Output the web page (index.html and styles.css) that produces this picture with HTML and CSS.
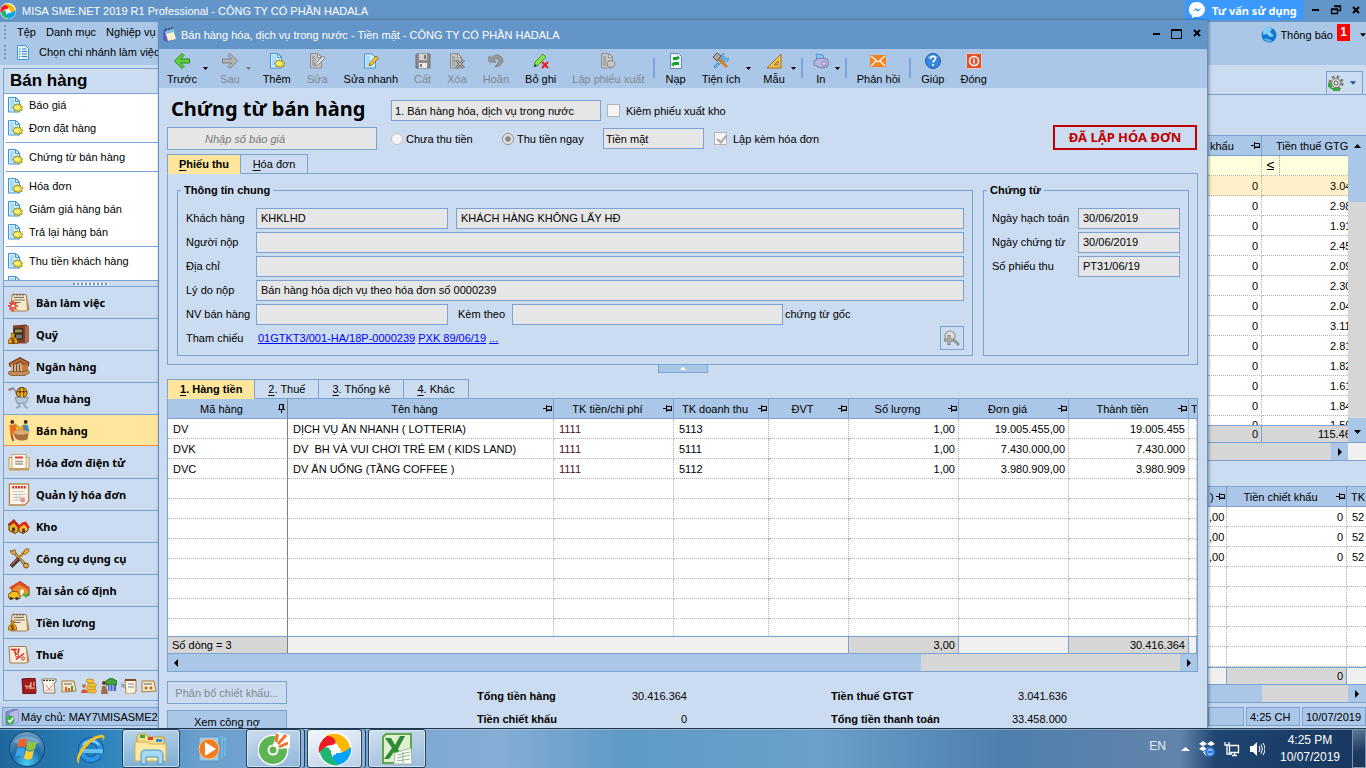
FILE: index.html
```
<!DOCTYPE html>
<html lang="vi">
<head>
    <meta charset="UTF-8">
    <meta name="viewport" content="width=device-width, initial-scale=1.0">
    <title>MISA SME.NET 2019 R1 Professional</title>
    <link rel="stylesheet" href="styles.css">
</head>
<body>
    <!-- shared icons -->
    <svg class="defs" aria-hidden="true">
        <symbol id="doc" viewBox="0 0 16 16">
            <path d="M1.500.500h7.500l3.500 3.500v11h-11z" fill="#d9f0fd" stroke="#3b94d9"/>
            <path d="M3 2h4v11h-4z" fill="#a9daf8"/>
            <path d="M8.500.500v4h4z" fill="#fff" stroke="#3b94d9"/>
            <path d="M10 6.500l1.500 1.300 2-.5.3 1.800 2 .9-1 1.500.4 1.800-2.200.2-1.800 1.200-1.700-1.200-2.500 0 .3-1.900-1.800-1.300 2-1.100.2-1.800 2.200.4z" fill="#e8d83c" stroke="#8a8420" stroke-width=".8"/>
            <ellipse cx="10" cy="10.500" rx="2.800" ry="1.700" fill="#fff27d"/>
        </symbol>
        <symbol id="docGray" viewBox="0 0 16 16">
            <path d="M1.500.500h7.500l3.500 3.500v11h-11z" fill="#c4c4c4" stroke="#8e8e8e"/>
            <path d="M8.500.500v4h4z" fill="#eee" stroke="#8e8e8e"/>
            <path d="M3 3h3v10H3z" fill="#a8a8a8"/>
        </symbol>
        <symbol id="pin" viewBox="0 0 9 8">
            <path d="M0 4.500h3M3.500 1v7M3.500 2.500h5v4h-5" fill="none" stroke="#000"/>
            <path d="M3 5.500h6v1.500H3z"/>
        </symbol>
        <symbol id="pinDown" viewBox="0 0 8 9">
            <path d="M0 5.500h7M1.500 5v-4.500h4v5M3.500 6v3" fill="none" stroke="#000"/>
            <path d="M4.500 0h1.500v5.500H4.500z"/>
        </symbol>
        <symbol id="down" viewBox="0 0 7 4"><path d="M0 0h7l-3.500 4z" fill="currentColor"/></symbol>
        <symbol id="right" viewBox="0 0 4 8"><path d="M0 0l4 4-4 4z"/></symbol>
        <symbol id="left" viewBox="0 0 4 8"><path d="M4 0l-4 4 4 4z"/></symbol>
        <symbol id="misa" viewBox="0 0 32 32">
            <circle cx="16" cy="16" r="16" fill="#fff"/>
            <path d="M7 4a15 15 0 0 1 23 10c-2 6-8 6-10 2-1-6-7-9-13-12z" fill="#fdb600"/>
            <path d="M31 14a15 15 0 0 1-12 17c-6 0-7-7-3-11 6 0 11-2 15-6z" fill="#00a2f5"/>
            <path d="M20 31a15 15 0 0 1-18-11c0-6 7-7 10-4 0 6 3 11 8 15z" fill="#1db673"/>
            <path d="M1 20a15 15 0 0 1 7-16c6-1 10 4 8 8-6 0-11 2-15 8z" fill="#ed1c24"/>
            <path d="M16 10l2 4 4 2-4 2-2 4-2-4-4-2 4-2z" fill="#fff"/>
        </symbol>
        <symbol id="note" viewBox="0 0 22 20">
            <path d="M4 2h14l3 15-3 1.500H3z" fill="#f5e8cc" stroke="#a37c4a"/>
            <path d="M18 2l3 15-2 1z" fill="#b98444"/>
            <path d="M6 5h10M6 7.500h11M5.500 10h7" stroke="#7d6c58"/>
            <path d="M6 1v3M9 1v3M12 1v3M15 1v3" stroke="#555" stroke-width=".8"/>
        </symbol>
        <symbol id="bag" viewBox="0 0 10 12">
            <path d="M3 1h4l-1 3c3 2 4 4 3.500 7h-9c-.5-3 .5-5 3.500-7z" fill="#f0a810" stroke="#7a4a06" stroke-width=".8"/>
            <path d="M6.500 6h-3v2h3v2h-3M5 5v6" fill="none" stroke="#5a2d00" stroke-width=".8"/>
        </symbol>
    </svg>

    <div class="desktop">
        <div class="app">
            <header class="app-title">
                <svg class="app-logo"><use href="#misa"/></svg>
                <span>MISA SME.NET 2019 R1 Professional - CÔNG TY CỔ PHẦN HADALA</span>
                <button class="support">
                    <svg width="16" height="16" viewBox="0 0 16 16"><path d="M8 0a8 7.500 0 0 1 0 15l-2-.3-3 1.300v-2.500a8 7.500 0 0 1 5-13.500z" fill="#fff"/><path d="M3.500 9.500l3.500-3.500 2 1.800 3.500-1.800-3.500 3.700-2-1.900z" fill="#2a8ff5"/></svg>
                    Tư vấn sử dụng
                </button>
                <div class="win-buttons">
                    <button aria-label="Thu nhỏ"><svg width="10" height="10"><path d="M1 5h7" stroke="#000" stroke-width="2"/></svg></button>
                    <button aria-label="Khôi phục"><svg width="12" height="10"><path d="M4.500 1.500h6v4h-3M4 1h7M1.500 4.500h6v4h-6zM1 4h7" fill="none" stroke="#000" stroke-width="1.300"/></svg></button>
                    <button aria-label="Đóng"><svg width="10" height="10"><path d="M2 2l6 6M8 2l-6 6" stroke="#000" stroke-width="2"/></svg></button>
                </div>
            </header>

            <div class="app-bars">
                <div>
                    <nav class="menu-row">
                        <i class="grip"></i>
                        <a href="#">Tệp</a>
                        <a href="#">Danh mục</a>
                        <a href="#">Nghiệp vụ</a>
                    </nav>
                    <div class="menu-row branch">
                        <i class="grip"></i>
                        <svg width="12" height="15" viewBox="0 0 12 15"><path d="M.5.5h8l3 3v11h-11z" fill="#e4f3fd" stroke="#3b94d9"/><path d="M5 4h4M5 6.500h5M5 9h5M5 11.500h5M2 4h1.500M2 6.500h1.500M2 9h1.500M2 11.500h1.500" stroke="#2c7fc4"/></svg>
                        <span>Chọn chi nhánh làm việc</span>
                    </div>
                </div>
                <div class="notice">
                    <svg width="16" height="16" viewBox="0 0 16 16"><circle cx="8" cy="8" r="7.500" fill="#1674cf"/><path d="M2 3c3-3 7-3 9-1l-2 3 4 4-4 1-3-3-4 1z" fill="#7fd0fb"/><path d="M3 12c3-1 5 0 8 2-3 2-6 1-8-2z" fill="#58b4ef"/></svg>
                    <span>Thông báo</span>
                    <b class="badge">1</b>
                    <svg class="caret"><use href="#down"/></svg>
                </div>
            </div>

            <div class="app-body">
                <aside class="sidebar">
                    <h2>Bán hàng</h2>
                    <ul class="tasks">
                        <li><svg><use href="#doc"/></svg><a href="#">Báo giá</a></li>
                        <li><svg><use href="#doc"/></svg><a href="#">Đơn đặt hàng</a></li>
                        <li class="line"></li>
                        <li><svg><use href="#doc"/></svg><a href="#">Chứng từ bán hàng</a></li>
                        <li class="line"></li>
                        <li><svg><use href="#doc"/></svg><a href="#">Hóa đơn</a></li>
                        <li><svg><use href="#doc"/></svg><a href="#">Giảm giá hàng bán</a></li>
                        <li><svg><use href="#doc"/></svg><a href="#">Trả lại hàng bán</a></li>
                        <li class="line"></li>
                        <li><svg><use href="#doc"/></svg><a href="#">Thu tiền khách hàng</a></li>
                        <li><svg><use href="#doc"/></svg></li>
                    </ul>
                    <div class="splitter"><i></i></div>
                    <nav class="modules">
                        <a href="#">
                            <svg viewBox="0 0 22 20"><use href="#note"/><path d="M5 8v11M0 13.500h10M1.500 10l7 7M8.500 10l-7 7" stroke="#e8301c" stroke-width="1.600"/><circle cx="5" cy="13.500" r="1.500" fill="#fff"/></svg>
                            Bàn làm việc
                        </a>
                        <a href="#">
                            <svg viewBox="0 0 22 22"><path d="M5 2l13-1 3 2v15l-3 2H5z" fill="#7b4027"/><path d="M17 2l4 1v15l-4 2z" fill="#a96b4c"/><path d="M6 5h9v11H6z" fill="#2c2320"/><path d="M7 6h7v3H7z" fill="#9c9148"/><path d="M8 11h6v4H8z" fill="#77736d"/><use href="#bag" x="0" y="9" width="10" height="12"/></svg>
                            Quỹ
                        </a>
                        <a href="#">
                            <svg viewBox="0 0 22 20"><path d="M1 7l11-6 9 5-1 4-8-4-10 4z" fill="#b4642d" stroke="#653010"/><path d="M3 8h16v7H3z" fill="#6b4428"/><path d="M4 8v8M7 8v8M10 8v8M13 8v8" stroke="#f4d6ab" stroke-width="1.500"/><path d="M14 8h6v7h-6z" fill="#c9793c"/><path d="M1 15h14l5-1 2 2-5 3H3l-3-2z" fill="#c28b58" stroke="#74431f" stroke-width=".7"/></svg>
                            Ngân hàng
                        </a>
                        <a href="#">
                            <svg viewBox="0 0 22 24"><path d="M1 3l4-2 2 3 3 7" fill="none" stroke="#8294a8" stroke-width="1.800"/><path d="M0 3l4-1" stroke="#c0654b" stroke-width="2"/><circle cx="14" cy="6" r="5.500" fill="#f6b81c" stroke="#533009"/><path d="M9 5h10M12 1v10M16 1v10" stroke="#4e2a09"/><path d="M7 11h14l-3 6H9z" fill="#b9c6d5" stroke="#8394a8"/><path d="M9 16l3 4-4 2M15 16l2 4 3 2" fill="none" stroke="#9aaabd" stroke-width="2"/></svg>
                            Mua hàng
                        </a>
                        <a href="#" class="active">
                            <svg viewBox="0 0 22 24"><circle cx="4" cy="3" r="2" fill="#4a2410"/><path d="M1 6h6l1 10H2z" fill="#ee6a1c"/><path d="M3 16l2 7" stroke="#b3430f" stroke-width="2"/><circle cx="18" cy="3" r="2" fill="#3a2413"/><path d="M15 6h5l2 7h-8z" fill="#3f8fc2"/><path d="M7 5l5 4 4-2v5H7z" fill="#f4b728" stroke="#855010" stroke-width=".6"/><path d="M5 14c4-4 13-4 16 0l-1 7c-4 2-10 2-13-1z" fill="#a8703e"/><ellipse cx="13" cy="14" rx="8" ry="2.500" fill="#d9ad73"/></svg>
                            Bán hàng
                        </a>
                        <a href="#">
                            <svg viewBox="0 0 22 20"><path d="M1 5h4v11H1zM17 5h4v11h-4z" fill="#f7e9c8" stroke="#c29b62"/><path d="M4 2h14v14H4z" fill="#fffdf5" stroke="#c9a46c"/><path d="M7 5h8" stroke="#e23b2d" stroke-width="2"/><path d="M7 9h8M7 11.500h8" stroke="#9d978e" stroke-width="1.500"/><path d="M1 17h20" stroke="#c69b5e" stroke-width="2"/></svg>
                            Hóa đơn điện tử
                        </a>
                        <a href="#">
                            <svg viewBox="0 0 22 24"><path d="M1 1h20v18l-4 4H1z" fill="#fdf7ec" stroke="#b98750" stroke-width="1.500"/><path d="M4 4.500h14" stroke="#e02020" stroke-width="2.500" stroke-dasharray="2 1"/><path d="M4 9h13M4 12h14M4 15h14M4 18h10M8 11v7M12 11v7" stroke="#b6b6bd" stroke-width=".8"/><circle cx="15" cy="18" r="2.500" fill="#e3929a"/></svg>
                            Quản lý hóa đơn
                        </a>
                        <a href="#">
                            <svg viewBox="0 0 22 16"><path d="M1 6v6l6 3 3-2V6L6 3z" fill="#edb720" stroke="#5f2a0a"/><path d="M0 6l6-5 5 6-2 1-3-4-4 3z" fill="#d32417" stroke="#701208" stroke-width=".6"/><path d="M4 9h3v4H4z" fill="#5c2d12"/><path d="M11 8v5l4 2 5-3V8l-4-3z" fill="#f7c52c" stroke="#5f2a0a"/><path d="M9 9l5-5 4-1 4 6-2 1-4-4-5 4z" fill="#e02a1b"/><path d="M14 10h3v4h-3z" fill="#70360f"/></svg>
                            Kho
                        </a>
                        <a href="#">
                            <svg viewBox="0 0 22 22"><path d="M4 3l15 16" stroke="#5d534b" stroke-width="3"/><path d="M4 3l15 16" stroke="#e1ae46" stroke-width="1.500"/><path d="M18 3L10 11" stroke="#c98e28" stroke-width="3"/><path d="M11 11l-8 8" stroke="#3d3733" stroke-width="4"/><path d="M10 11l-7 7" stroke="#b0593c" stroke-width="1.500"/><path d="M2 3c1 4 4 5 6 3l-1-4-2 2z" fill="#e7b042" stroke="#6f4a14" stroke-width=".7"/><path d="M15 6l3-5 3 1-1 3-3 2z" fill="#f0b63e" stroke="#6f4a14" stroke-width=".7"/><circle cx="18" cy="18" r="2.500" fill="#e7b042" stroke="#6f4a14"/></svg>
                            Công cụ dụng cụ
                        </a>
                        <a href="#">
                            <svg viewBox="0 0 22 20"><path d="M4 8l8-7 9 6v8H5z" fill="#e98a35" stroke="#8c3812"/><path d="M1 7l10-6 11 6-2 2-9-5-8 5z" fill="#df4a20"/><path d="M12 9h4v6h-4z" fill="#fff0c4"/><path d="M15 13l3 3 4-5" stroke="#4fae3b" stroke-width="2" fill="none"/><path d="M0 14l4-3h5l3 4v3H1z" fill="#f0bd22" stroke="#805408"/><circle cx="3" cy="18" r="1.700" fill="#443"/><circle cx="9" cy="18" r="1.700" fill="#443"/></svg>
                            Tài sản cố định
                        </a>
                        <a href="#">
                            <svg viewBox="0 0 22 20"><use href="#note"/><use href="#bag" x="0" y="7" width="9" height="12"/></svg>
                            Tiền lương
                        </a>
                        <a href="#">
                            <svg viewBox="0 0 22 20"><path d="M1 2h17l3 15-3 1.500H2z" fill="#f7eddb" stroke="#a37c4a"/><path d="M18 2l3 15-2 1z" fill="#b98444"/><path d="M3 5h6M6 5l2 5M11 4l-1 5M8 15l8-6" stroke="#d9231c" stroke-width="1.500"/><circle cx="9" cy="11" r="1.500" fill="none" stroke="#d9231c"/><circle cx="15" cy="14" r="1.500" fill="none" stroke="#d9231c"/></svg>
                            Thuế
                        </a>
                    </nav>
                    <div class="shortcuts">
                        <svg viewBox="0 0 16 16"><path d="M1 1l13-1 1 14-1 2H2z" fill="#a21c20" stroke="#6d0c10"/><path d="M4 8h2v3M7 9l2-2v4M10 4v7M13 4v4M11 10h3" stroke="#ffdcb8" fill="none"/></svg>
                        <svg viewBox="0 0 16 16"><path d="M1 1h14v3l-2 1 1 10H3L2 5 1 4z" fill="#fdf9ef" stroke="#8b765a"/><path d="M2 2.500h12" stroke="#333" stroke-dasharray="2 1"/><path d="M5 7l3 4 4-4M5 12h7" fill="none" stroke="#c88"/></svg>
                        <svg viewBox="0 0 16 16"><path d="M1 3h12l2 10-14 1z" fill="#f8e8c4" stroke="#a67840"/><path d="M3 6h8" stroke="#666"/><path d="M5 13V9M8 13v-3" stroke="#e3542d" stroke-width="2"/><path d="M11 13V8" stroke="#3a9c48" stroke-width="2"/></svg>
                        <svg viewBox="0 0 16 16"><g fill="#f4c63a" stroke="#b87b14" stroke-width=".7"><ellipse cx="11" cy="13" rx="4.500" ry="2"/><ellipse cx="10" cy="10" rx="4.500" ry="2"/><ellipse cx="11" cy="7" rx="4.500" ry="2"/><ellipse cx="9" cy="3" rx="4" ry="2"/></g><circle cx="3" cy="8" r="2" fill="#c27a49"/><path d="M0 15c0-5 6-5 7 0z" fill="#d85a3a"/></svg>
                        <svg viewBox="0 0 16 16"><path d="M5 3l5-3 6 3v4H5z" fill="#43a53c" stroke="#256c21"/><path d="M7 7h8v6H7z" fill="#4a62b8"/><path d="M9 7v6M12 7v6" stroke="#d3dcf7"/><circle cx="3" cy="5" r="2" fill="#6e3d22"/><path d="M0 16l1-8h4l2 8z" fill="#a46a44"/></svg>
                        <svg viewBox="0 0 16 16"><path d="M4 2h11v12l-3 2H5z" fill="#fdf2dc" stroke="#b47a41"/><path d="M4 2h11" stroke="#7c5230" stroke-width="2"/><path d="M7 6h6M7 9h6" stroke="#7785b5"/><path d="M0 5l5 2-1 3-4-1z" fill="#9aa4b3"/></svg>
                        <svg viewBox="0 0 16 16"><path d="M1 3h12l2 10-14 1z" fill="#f8e8c4" stroke="#a67840"/><path d="M3 6h8" stroke="#666"/><circle cx="5" cy="10" r="1.500" fill="#b06828"/><circle cx="10" cy="10" r="1.500" fill="#b06828"/></svg>
                    </div>
                </aside>

                <main class="workspace">
                    <div class="work-tools">
                        <button class="gear" aria-label="Tùy chọn">
                            <svg width="16" height="16" viewBox="0 0 16 16"><circle cx="8" cy="8" r="6.300" fill="none" stroke="#77716b" stroke-width="2.500" stroke-dasharray="2.500 2.450"/><circle cx="8" cy="8" r="4.500" fill="#ddd" stroke="#77716b"/><circle cx="8" cy="8" r="2" fill="#f3f6fa" stroke="#555"/><path d="M1 8c0 5 5 8 9 5l1 2-6 0M1 8l-1 4M1 8l3 2" stroke="#36a834" stroke-width="1.800" fill="none"/></svg>
                            <svg class="caret"><use href="#down"/></svg>
                        </button>
                    </div>

                    <section class="side-grid upper">
                        <div class="with-vscroll">
                            <table class="grid">
                                <colgroup><col class="c-rest"><col class="c-86"></colgroup>
                                <thead><tr><th class="cut-head">khấu<svg class="pin"><use href="#pin"/></svg></th><th class="tax-head">Tiền thuế GTGT</th></tr></thead>
                                <tbody>
                                    <tr class="filter"><td></td><td class="op"><span>≤</span></td></tr>
                                    <tr class="current"><td class="num">0</td><td class="tax">3.04</td></tr>
                                    <tr><td class="num">0</td><td class="tax">2.98</td></tr>
                                    <tr><td class="num">0</td><td class="tax">1.91</td></tr>
                                    <tr><td class="num">0</td><td class="tax">2.45</td></tr>
                                    <tr><td class="num">0</td><td class="tax">2.09</td></tr>
                                    <tr><td class="num">0</td><td class="tax">2.30</td></tr>
                                    <tr><td class="num">0</td><td class="tax">2.04</td></tr>
                                    <tr><td class="num">0</td><td class="tax">3.11</td></tr>
                                    <tr><td class="num">0</td><td class="tax">2.81</td></tr>
                                    <tr><td class="num">0</td><td class="tax">1.82</td></tr>
                                    <tr><td class="num">0</td><td class="tax">1.61</td></tr>
                                    <tr><td class="num">0</td><td class="tax">1.84</td></tr>
                                    <tr class="half"><td class="num"><div>0</div></td><td class="tax"><div>1.50</div></td></tr>
                                </tbody>
                                <tfoot><tr><td class="num sum">0</td><td class="sum tax-sum">115.46</td></tr></tfoot>
                            </table>
                            <div class="vscroll">
                                <svg width="9" height="5"><path d="M1 5h7l-3.500-4z"/></svg>
                                <i></i>
                                <svg width="9" height="5"><path d="M1 0h7l-3.500 4z"/></svg>
                            </div>
                        </div>
                        <div class="hscroll"><i></i><span><svg class="arrow"><use href="#right"/></svg></span><em></em></div>
                    </section>

                    <section class="side-grid lower">
                        <table class="grid">
                            <colgroup><col class="c-rest"><col class="c-120"><col class="c-19"></colgroup>
                            <thead><tr><th class="cut-head">)<svg class="pin"><use href="#pin"/></svg></th><th>Tiền chiết khấu<svg class="pin"><use href="#pin"/></svg></th><th class="tk tk-wide">TK</th></tr></thead>
                            <tbody>
                                <tr><td>,00</td><td class="num">0</td><td>52</td></tr>
                                <tr><td>,00</td><td class="num">0</td><td>52</td></tr>
                                <tr><td>,00</td><td class="num">0</td><td>52</td></tr>
                                <tr><td></td><td></td><td></td></tr>
                                <tr><td></td><td></td><td></td></tr>
                                <tr><td></td><td></td><td></td></tr>
                                <tr><td></td><td></td><td></td></tr>
                                <tr><td></td><td></td><td></td></tr>
                            </tbody>
                            <tfoot><tr><td></td><td class="num sum">0</td><td></td></tr></tfoot>
                        </table>
                        <div class="hscroll thumb"><i></i><span><svg class="arrow"><use href="#right"/></svg></span></div>
                    </section>
                </main>
            </div>

            <footer class="status">
                <span class="server">
                    <svg width="14" height="16" viewBox="0 0 14 16"><path d="M1 3l9-3 3 1v12l-8 3-4-1z" fill="#8b90c8" stroke="#5d629a" stroke-width=".7"/><path d="M5 4l8-3v12l-8 3z" fill="#b7bbe6"/><circle cx="5" cy="11" r="4.500" fill="#3fb04a"/><path d="M3 11l2 2 3-4" fill="none" stroke="#fff" stroke-width="1.500"/></svg>
                    Máy chủ: MAY7\MISASME2019
                </span>
                <span class="s-empty"></span>
                <span class="s-time">4:25 CH</span>
                <span class="s-date">10/07/2019</span>
            </footer>
        </div>

        <!-- sales voucher window -->
        <div class="dialog">
            <header class="dialog-title">
                <svg width="15" height="16" viewBox="0 0 15 16"><path d="M1 3l9-2 4 11-9 3-4-2z" fill="#5c5bc0"/><path d="M3 4l8-2 3 10-8 2z" fill="#fff2c9"/><path d="M4 1v4M7 1v4M10 0v4" stroke="#334" /><path d="M4 4l7-2 .5 3-7 2z" fill="#6fc3ee"/></svg>
                <span>Bán hàng hóa, dịch vụ trong nước - Tiền mặt - CÔNG TY CỔ PHẦN HADALA</span>
                <div class="win-buttons">
                    <button aria-label="Thu nhỏ"><svg width="10" height="10"><path d="M1 5h7" stroke="#000" stroke-width="2"/></svg></button>
                    <button aria-label="Phóng to"><svg width="12" height="10"><path d="M.5.500h10v9H.5zM0 1.500h11" fill="none" stroke="#000"/></svg></button>
                    <button aria-label="Đóng"><svg width="10" height="10"><path d="M2 1l6 6M8 1l-6 6" stroke="#000" stroke-width="2"/></svg></button>
                </div>
            </header>

            <div class="toolbar">
                <button><svg viewBox="0 0 16 16"><path d="M8 .5l-7.500 7.500 7.500 7.500 2-2-3.500-3.500h9v-4H6.500l3.500-3.500z" fill="#62cf3c" stroke="#1e8a12"/></svg>Trước</button>
                <svg class="drop"><use href="#down"/></svg>
                <button disabled><svg viewBox="0 0 16 16"><path d="M8 .5l7.500 7.500-7.500 7.500-2-2 3.500-3.500H.5v-4h9L6 2.500z" fill="#b5b5b5" stroke="#7e7e7e"/></svg>Sau</button>
                <svg class="drop dim"><use href="#down"/></svg>
                <button><svg viewBox="0 0 16 16"><use href="#doc"/></svg>Thêm</button>
                <button disabled><svg viewBox="0 0 16 16"><use href="#docGray"/><path d="M6 13l1-3 7-7 2 2-7 7z" fill="#ddd" stroke="#888"/></svg>Sửa</button>
                <button><svg viewBox="0 0 16 16"><path d="M1.500 1h7.500l3.500 3.500v10.500h-11z" fill="#d9f0fd" stroke="#3b94d9"/><path d="M3 3h4v10h-4z" fill="#a9daf8"/><path d="M6 13l1-3 6-7 2.500 2-6.500 7z" fill="#f8c945" stroke="#96731e"/></svg>Sửa nhanh</button>
                <button disabled><svg viewBox="0 0 16 16"><path d="M1 1h14v14H1z" fill="#8c8c8c" stroke="#6f6f6f"/><path d="M4 1h8v6H4z" fill="#d2d2d2"/><path d="M4 10h8v5H4z" fill="#eee"/><path d="M9 2h2v4H9zM5 11h2v3H5z" fill="#777"/></svg>Cất</button>
                <button disabled><svg viewBox="0 0 16 16"><use href="#docGray"/><path d="M7 7l8 8M15 7l-8 8" stroke="#777" stroke-width="3"/><path d="M7 7l8 8M15 7l-8 8" stroke="#b5b5b5"/></svg>Xóa</button>
                <button disabled><svg viewBox="0 0 16 16"><path d="M1 3v6h7L5.500 6.500C9 4 12.500 7 10 10l-3 4c8-1 10-8 5-11-3-2-6-1-8.500 2z" fill="#9a9a9a" stroke="#7b7b7b"/></svg>Hoãn</button>
                <button><svg viewBox="0 0 16 16"><path d="M1 14l1-5 8-8 3 3-8 8z" fill="#8be04a" stroke="#3f9b1c"/><path d="M1 14l1-3 2 2z" fill="#333"/><path d="M9 9l6 6M15 9l-6 6" stroke="#f01414" stroke-width="1.800"/></svg>Bỏ ghi</button>
                <button disabled><svg viewBox="0 0 16 16"><use href="#docGray"/><ellipse cx="11" cy="11" rx="4" ry="3.500" fill="#c6c6c6" stroke="#888"/></svg>Lập phiếu xuất</button>
                <i class="sep"></i>
                <button><svg viewBox="0 0 16 16"><path d="M2.500.500h8l3 3v12h-11z" fill="#eef6fd" stroke="#6a86b8"/><path d="M5 7V4h4V2l3 3-3 2zM11 9v3H6v2l-3-3 3-2z" fill="#17a324"/></svg>Nạp</button>
                <button><svg viewBox="0 0 16 16"><path d="M1.500 14.500L12 4" stroke="#3d8fca" stroke-width="3"/><path d="M2 14L12 4" stroke="#b4e1f7"/><path d="M11 0l-1 4 2 2 4-1-1 3-3 1-4-4 1-4z" fill="#6dbbe8" stroke="#3d8fca" stroke-width=".6"/><path d="M5 5l9 9" stroke="#d98125" stroke-width="3"/><path d="M0 4l4-4 4 3-4 5z" fill="#b1a79c" stroke="#5e544b"/></svg>Tiện ích</button>
                <svg class="drop"><use href="#down"/></svg>
                <button><svg viewBox="0 0 16 16"><path d="M15 1v14H1z" fill="#f3c253" stroke="#a56a12"/><path d="M12 8v4H8z" fill="#adc6e6" stroke="#a56a12"/></svg>Mẫu</button>
                <svg class="drop"><use href="#down"/></svg>
                <i class="sep"></i>
                <button><svg viewBox="0 0 16 16"><path d="M3 1l7 1 1 4-7 1z" fill="#86cdf3" stroke="#4c95cd"/><path d="M1 8l5-3 8 1 2 4-2 4-6 1-7-3z" fill="#b8b5e0" stroke="#7875ad"/><circle cx="11" cy="10.500" r="2" fill="#e9e8fa" stroke="#7875ad"/></svg>In</button>
                <svg class="drop"><use href="#down"/></svg>
                <i class="sep"></i>
                <button><svg viewBox="0 0 16 16"><path d="M0 2h16v12H0z" fill="#f58220"/><path d="M1 3l7 6 7-6M1 13l5-5M15 13l-5-5" fill="none" stroke="#fff" stroke-width="1.300"/></svg>Phản hồi</button>
                <i class="sep"></i>
                <button><svg viewBox="0 0 16 16"><circle cx="8" cy="8" r="7.500" fill="#3388dd" stroke="#1f5da8"/><path d="M3 5a6 5 0 0 1 10 0" stroke="#92c7f5" fill="none"/><path d="M5.500 6c0-3.500 5-3.500 5-.5 0 2-2.500 2-2.500 4" stroke="#fff" stroke-width="1.700" fill="none"/><circle cx="8" cy="12" r="1.100" fill="#fff"/></svg>Giúp</button>
                <button><svg viewBox="0 0 16 16"><rect x=".5" y=".5" width="15" height="15" rx="1" fill="#e2512f" stroke="#f6c8ba"/><circle cx="8" cy="8" r="4.500" fill="none" stroke="#fff" stroke-width="1.500"/><path d="M8 5.500v5" stroke="#fff" stroke-width="1.500"/></svg>Đóng</button>
            </div>

            <div class="voucher">
                <div class="voucher-head">
                    <div class="head-left">
                        <h1>Chứng từ bán hàng</h1>
                        <input type="text" class="quote-no" placeholder="Nhập số báo giá" aria-label="Số báo giá">
                    </div>
                    <div class="head-options">
                        <div class="opt-row">
                            <select class="sale-type" aria-label="Loại bán hàng"><option>1. Bán hàng hóa, dịch vụ trong nước</option></select>
                            <label><input type="checkbox"> Kiêm phiếu xuất kho</label>
                        </div>
                        <div class="opt-row second">
                            <label class="unpaid"><input type="radio" name="pay"> Chưa thu tiền</label>
                            <label class="paid"><input type="radio" name="pay" checked> Thu tiền ngay</label>
                            <select class="pay-by" aria-label="Hình thức thu"><option>Tiền mặt</option></select>
                            <label><input type="checkbox" checked> Lập kèm hóa đơn</label>
                        </div>
                    </div>
                    <div class="stamp">ĐÃ LẬP HÓA ĐƠN</div>
                </div>

                <div class="tabs main-tabs">
                    <button class="on"><u>P</u>hiếu thu</button>
                    <button><u>H</u>óa đơn</button>
                </div>
                <div class="panel">
                    <fieldset class="general">
                        <legend>Thông tin chung</legend>
                        <div class="row">
                            <label for="customer">Khách hàng</label>
                            <input type="text" id="customer" class="short" value="KHKLHD">
                            <input type="text" class="grow name" value="KHÁCH HÀNG KHÔNG LẤY HĐ" aria-label="Tên khách hàng">
                        </div>
                        <div class="row"><label for="payer">Người nộp</label><input type="text" id="payer" class="grow"></div>
                        <div class="row"><label for="address">Địa chỉ</label><input type="text" id="address" class="grow"></div>
                        <div class="row"><label for="reason">Lý do nộp</label><input type="text" id="reason" class="grow" value="Bán hàng hóa dịch vụ theo hóa đơn số 0000239"></div>
                        <div class="row">
                            <label for="seller">NV bán hàng</label>
                            <input type="text" id="seller" class="short">
                            <label for="attach" class="attach">Kèm theo</label>
                            <input type="text" id="attach" class="attach-no">
                            <span class="after">chứng từ gốc</span>
                        </div>
                        <div class="row">
                            <span class="label">Tham chiếu</span>
                            <div class="refs"><a href="#">01GTKT3/001-HA/18P-0000239</a> <a href="#">PXK 89/06/19</a> <a href="#">...</a></div>
                            <button class="find" aria-label="Chọn chứng từ">
                                <svg width="16" height="16" viewBox="0 0 16 16"><circle cx="6" cy="6" r="5" fill="#ddd" stroke="#a5a5a5" stroke-width="1.500"/><path d="M10 10l5 5" stroke="#999" stroke-width="3"/><path d="M5 5v10M0 10h10" stroke="#858585" stroke-width="3"/><path d="M5 6v8M1 10h8" stroke="#c4c4c4"/></svg>
                            </button>
                        </div>
                    </fieldset>
                    <fieldset class="document">
                        <legend>Chứng từ</legend>
                        <div class="row"><label for="postDate">Ngày hạch toán</label><input type="text" id="postDate" class="grow" value="30/06/2019"></div>
                        <div class="row"><label for="docDate">Ngày chứng từ</label><input type="text" id="docDate" class="grow" value="30/06/2019"></div>
                        <div class="row"><label for="docNo">Số phiếu thu</label><input type="text" id="docNo" class="grow" value="PT31/06/19"></div>
                    </fieldset>
                </div>
                <button class="collapse" aria-label="Thu gọn"><svg width="6" height="3"><path d="M0 3h6l-3-3z" fill="#fff"/></svg></button>

                <div class="tabs detail-tabs">
                    <button class="on"><u>1</u>. Hàng tiền</button>
                    <button><u>2</u>. Thuế</button>
                    <button><u>3</u>. Thống kê</button>
                    <button><u>4</u>. Khác</button>
                </div>
                <div class="detail">
                    <table class="grid lines">
                        <colgroup><col class="c-120"><col class="c-rest"><col class="c-120"><col class="c-95"><col class="c-80"><col class="c-110"><col class="c-110"><col class="c-120"><col class="c-8"></colgroup>
                        <thead>
                            <tr>
                                <th>Mã hàng<svg class="pin down"><use href="#pinDown"/></svg></th>
                                <th>Tên hàng<svg class="pin"><use href="#pin"/></svg></th>
                                <th>TK tiền/chi phí<svg class="pin"><use href="#pin"/></svg></th>
                                <th>TK doanh thu<svg class="pin"><use href="#pin"/></svg></th>
                                <th>ĐVT<svg class="pin"><use href="#pin"/></svg></th>
                                <th>Số lượng<svg class="pin"><use href="#pin"/></svg></th>
                                <th>Đơn giá<svg class="pin"><use href="#pin"/></svg></th>
                                <th>Thành tiền<svg class="pin"><use href="#pin"/></svg></th>
                                <th class="tk">T</th>
                            </tr>
                        </thead>
                        <tbody>
                            <tr><td>DV</td><td>DỊCH VỤ ĂN NHANH ( LOTTERIA)</td><td class="acc">1111</td><td>5113</td><td></td><td class="num">1,00</td><td class="num">19.005.455,00</td><td class="num">19.005.455</td><td></td></tr>
                            <tr><td>DVK</td><td>DV&nbsp; BH VÀ VUI CHƠI TRẺ EM ( KIDS LAND)</td><td class="acc">1111</td><td>5111</td><td></td><td class="num">1,00</td><td class="num">7.430.000,00</td><td class="num">7.430.000</td><td></td></tr>
                            <tr><td>DVC</td><td>DV ĂN UỐNG (TẦNG COFFEE )</td><td class="acc">1111</td><td>5112</td><td></td><td class="num">1,00</td><td class="num">3.980.909,00</td><td class="num">3.980.909</td><td></td></tr>
                            <tr><td></td><td></td><td></td><td></td><td></td><td></td><td></td><td></td><td></td></tr>
                            <tr><td></td><td></td><td></td><td></td><td></td><td></td><td></td><td></td><td></td></tr>
                            <tr><td></td><td></td><td></td><td></td><td></td><td></td><td></td><td></td><td></td></tr>
                            <tr><td></td><td></td><td></td><td></td><td></td><td></td><td></td><td></td><td></td></tr>
                            <tr><td></td><td></td><td></td><td></td><td></td><td></td><td></td><td></td><td></td></tr>
                            <tr><td></td><td></td><td></td><td></td><td></td><td></td><td></td><td></td><td></td></tr>
                            <tr><td></td><td></td><td></td><td></td><td></td><td></td><td></td><td></td><td></td></tr>
                            <tr class="last"><td></td><td></td><td></td><td></td><td></td><td></td><td></td><td></td><td></td></tr>
                        </tbody>
                        <tfoot>
                            <tr><td class="sum count">Số dòng = 3</td><td colspan="4"></td><td class="num sum">3,00</td><td></td><td class="num sum">30.416.364</td><td></td></tr>
                        </tfoot>
                    </table>
                    <div class="hscroll wide"><i><svg class="arrow"><use href="#left"/></svg></i><b></b><span><svg class="arrow"><use href="#right"/></svg></span></div>
                </div>

                <div class="bottom">
                    <div class="actions">
                        <button disabled>Phân bổ chiết khấu...</button>
                        <button>Xem công nợ</button>
                    </div>
                    <dl class="totals">
                        <div><dt>Tổng tiền hàng</dt><dd>30.416.364</dd></div>
                        <div><dt>Tiền chiết khấu</dt><dd>0</dd></div>
                    </dl>
                    <dl class="totals tax-totals">
                        <div><dt>Tiền thuế GTGT</dt><dd>3.041.636</dd></div>
                        <div><dt>Tổng tiền thanh toán</dt><dd>33.458.000</dd></div>
                    </dl>
                </div>
            </div>
        </div>
    </div>

    <div class="taskbar">
        <button class="start" aria-label="Start">
            <svg width="38" height="38" viewBox="0 0 38 38">
                <defs><radialGradient id="orb" cx=".5" cy=".9" r=".9"><stop offset="0" stop-color="#45d2f4"/><stop offset=".5" stop-color="#1d6aa8"/><stop offset="1" stop-color="#6f9fc4"/></radialGradient></defs>
                <circle cx="19" cy="19" r="17.500" fill="url(#orb)" stroke="#153f66"/>
                <path d="M6 12a15 11 0 0 1 26 0c-8 5-18 5-26 0z" fill="#fff" opacity=".25"/>
                <path d="M11 10c3-2 6-2 8 0l-2 8c-3-2-5-2-8 0z" fill="#f0642c"/>
                <path d="M20 11c3 2 6 2 9 0l-2 8c-3 2-6 2-9 0z" fill="#8cc63e"/>
                <path d="M9 19c3-2 5-2 8 0l-2 8c-3-2-5-2-8 0z" fill="#3fa3ea"/>
                <path d="M18 20c3 2 5 2 8 0l-2 8c-3 2-5 2-8 0z" fill="#fdd02f"/>
            </svg>
        </button>
        <button class="task" aria-label="Internet Explorer">
            <svg width="32" height="32" viewBox="0 0 32 32"><circle cx="16" cy="17" r="9.500" fill="none" stroke="#12599f" stroke-width="7"/><circle cx="16" cy="17" r="9.500" fill="none" stroke="#2a93e3" stroke-width="5"/><path d="M8 18h20" stroke="#63c0f5" stroke-width="4"/><path d="M21 20.500h10l-4 4z" fill="#2f7fb9"/><path d="M8 12a10 10 0 0 1 16 0" fill="none" stroke="#8fdcff" stroke-width="2"/><path d="M4 31C-3 26 10 4 25 2c4-1 6 2 3 6 1-4-1-4-4-3C13 9 3 23 4 31z" fill="#f4c226"/></svg>
        </button>
        <button class="task open" aria-label="Windows Explorer">
            <svg width="34" height="32" viewBox="0 0 34 32"><path d="M3 3l2-2h7l2 3h16v20H3z" fill="#f7dd86" stroke="#c59a37"/><path d="M6 2h5v3H6z" fill="#3aa546"/><path d="M14 4h5v3h-5z" fill="#d93f35"/><path d="M22 6h6v3h-6z" fill="#3a8fdc"/><path d="M1 9h13l2 2h16v17H1z" fill="#fbe9a5" stroke="#d3ad50"/><path d="M7 31V21c0-3 2-4 4-4h13c3 0 5 2 5 4v10h-5v-7H12v7z" fill="#a5d8f3" stroke="#4b93c2"/></svg>
        </button>
        <button class="task" aria-label="Media Player">
            <svg width="32" height="28" viewBox="0 0 32 28"><path d="M4 2h20v24H4z" fill="#9ac9ea" stroke="#5a95bf"/><path d="M24 2h3v22M27 3h3v18" fill="none" stroke="#6fb4e0" stroke-width="2"/><circle cx="14" cy="14" r="10" fill="#f57b1d" stroke="#fbc08a"/><path d="M10 7l11 7-11 7z" fill="#fff"/></svg>
        </button>
        <button class="task open stack" aria-label="Cốc Cốc">
            <svg width="32" height="34" viewBox="0 0 32 34"><circle cx="15" cy="18" r="15.500" fill="#fff"/><circle cx="15" cy="18" r="9.500" fill="none" stroke="#5cb552" stroke-width="9"/><circle cx="15" cy="18" r="5.500" fill="#fff"/><circle cx="15" cy="18" r="3.500" fill="#5cb552"/><path d="M15 13L19 0l13 3v13l-11 1z" fill="#fff"/><path d="M18 10l1.500-8M20 12l8-9M21 15l9-4" stroke="#f3702a" stroke-width="3"/></svg>
        </button>
        <button class="task open stack bright" aria-label="MISA SME.NET">
            <svg width="34" height="34"><use href="#misa"/></svg>
        </button>
        <button class="task open" aria-label="Excel">
            <svg width="32" height="32" viewBox="0 0 32 32"><path d="M5 1h25v29H2V4z" fill="#dff0d2" stroke="#5da748" stroke-width="2"/><path d="M4 5h6l4 7 5-9h5l-7 13 7 11h-6l-5-8-5 7H3l8-11z" fill="#2f8a36"/><path d="M14 20l16-5 1 16H13z" fill="#fff" stroke="#9cb99d"/><path d="M16 22l13-3M16 25l13-3M16 28l13-2M22 19v11" stroke="#8eb390"/></svg>
        </button>
        <div class="tray">
            <span class="lang">EN</span>
            <svg width="9" height="5"><path d="M0 5h9l-4.500-4z" fill="#fff"/></svg>
            <svg width="16" height="16" viewBox="0 0 16 16"><path d="M4 0l4 3-4 2-4-2zM12 0l4 3-4 2-4-2zM4 5l4 3-4 2-4-2zM4 11l4-2 3 2-4 4z" fill="#fff"/><circle cx="11" cy="11" r="5" fill="#2b7de0"/><path d="M8.500 10a3 3 0 0 1 5 0M13.500 12a3 3 0 0 1-5 0" stroke="#fff" fill="none"/></svg>
            <svg width="16" height="16" viewBox="0 0 16 16"><path d="M5.500 4.500h9v7h-9zM8 14.500h5M10.500 12v2" fill="#22436b" stroke="#fff" stroke-width="1.300"/><path d="M1 1v3h4V1M3 4v9h5" stroke="#fff" fill="none" stroke-width="1.300"/></svg>
            <svg width="16" height="16" viewBox="0 0 16 16"><path d="M1 5h3l4-4v14l-4-4H1z" fill="#fff"/><path d="M10 5q2 3 0 6M12 3.500q3 4.500 0 9M14 2q4 6 0 12" stroke="#fff" fill="none"/></svg>
            <time>4:25 PM<br>10/07/2019</time>
            <button class="peek" aria-label="Hiện màn hình nền"></button>
        </div>
    </div>
</body>
</html>
```
FILE: styles.css
```
* {
    box-sizing: border-box;
}

body {
    margin: 0;
    height: 100vh;
    display: flex;
    flex-direction: column;
    overflow: hidden;
    font-family: "Liberation Sans", Arial, sans-serif;
    font-size: 11px;
    line-height: 14px;
    color: #000;
}

.defs {
    position: absolute;
    width: 0;
    height: 0;
}

a {
    color: inherit;
    text-decoration: none;
}

button, input, select {
    font: inherit;
    color: inherit;
    margin: 0;
    border-radius: 0;
}

button {
    padding: 0;
    border: none;
    background: none;
}

svg {
    flex: none;
    display: block;
}

.desktop {
    position: relative;
    flex: 1;
    min-height: 0;
}

/* main window */
.app {
    height: 100%;
    display: flex;
    flex-direction: column;
    background: #cbdcf0;
}

.app-title {
    flex: none;
    height: 22px;
    display: flex;
    align-items: center;
    background: #6495c8;
    color: #fff;
}

.app-logo {
    width: 16px;
    height: 16px;
    margin-right: 6px;
}

.support {
    margin-left: auto;
    align-self: flex-start;
    width: 119px;
    height: 20px;
    padding-left: 4px;
    display: flex;
    align-items: center;
    gap: 7px;
    background: #3a99fb;
    color: #fff;
    font: bold 11px "Noto Sans", sans-serif;
    white-space: nowrap;
}

.win-buttons {
    display: flex;
    align-items: center;
    gap: 9px;
    padding: 0 5px 2px 7px;
}

.app-bars {
    flex: none;
    height: 43px;
    display: flex;
    justify-content: space-between;
    background: #abc7e7;
}

.menu-row {
    height: 20px;
    display: flex;
    align-items: center;
    gap: 10px;
    padding-left: 3px;
}

.grip {
    width: 4px;
    height: 17px;
    background: radial-gradient(circle, #7d95b5 1px, transparent 1px) 0 0 / 4px 4px;
}

.notice {
    height: 26px;
    display: flex;
    align-items: center;
    gap: 3px;
}

.badge {
    width: 13px;
    height: 17px;
    margin: 0 7px 6px 1px;
    line-height: 17px;
    text-align: center;
    background: #f00;
    color: #fff;
    font-size: 12px;
}

.caret {
    width: 6px;
    height: 4px;
}

.app-body {
    flex: 1;
    min-height: 0;
    display: flex;
    padding-top: 3px;
}

/* left navigation */
.sidebar {
    width: 190px;
    margin: 0 0 2px 3px;
    display: flex;
    flex-direction: column;
    border: 1px solid #7ba2d0;
}

.sidebar h2 {
    margin: 0;
    height: 25px;
    padding-left: 6px;
    font-size: 17px;
    line-height: 24px;
    border-bottom: 1px solid #7ba2d0;
}

.tasks {
    height: 186px;
    margin: 0;
    padding: 0;
    overflow: hidden;
    list-style: none;
    background: #fff;
}

.tasks li {
    height: 23px;
    display: flex;
    align-items: center;
    gap: 6px;
    padding: 0 0 2px 3px;
}

.tasks svg {
    width: 16px;
    height: 16px;
}

.tasks .line {
    height: 1px;
    padding: 0;
    margin: 2px 0 3px 2px;
    background: #7ba2d0;
}

.splitter {
    height: 6px;
    padding: 2px 0 0 69px;
    border-top: 1px solid #7ba2d0;
}

.splitter i {
    display: block;
    width: 36px;
    height: 2px;
    background: repeating-linear-gradient(90deg, #6a93c4 0 2px, #fff 2px 4px);
}

.modules a {
    height: 32px;
    display: flex;
    align-items: center;
    gap: 6px;
    padding-left: 4px;
    border-top: 1px solid #7ba2d0;
    font: bold 11px "Noto Sans", sans-serif;
}

.modules svg {
    width: 22px;
    height: 23px;
}

.modules .active {
    background: #ffe69c;
    border-bottom: 1px solid #ff8c3c;
}

.modules .active + a {
    border-top: none;
}

.shortcuts {
    flex: 1;
    display: flex;
    align-items: center;
    gap: 4px;
    padding-left: 17px;
    border-top: 1px solid #7ba2d0;
}

.shortcuts svg {
    width: 16px;
    height: 16px;
}

/* lists behind the voucher */
.workspace {
    flex: 1;
    min-width: 0;
    display: flex;
    flex-direction: column;
    align-items: flex-end;
}

.work-tools {
    width: 100%;
    height: 27px;
    padding: 3px 3px 0 0;
    display: flex;
    justify-content: flex-end;
    border-bottom: 1px solid #7ba2d0;
}

.gear {
    width: 37px;
    height: 24px;
    padding: 0 6px 0 1px;
    display: flex;
    align-items: center;
    justify-content: space-between;
    border: 1px solid #7ba2d0;
    color: #1a4f9c;
}

.side-grid {
    width: 158px;
    border-top: 1px solid #7ba2d0;
    border-bottom: 1px solid #7ba2d0;
}

.upper {
    margin-top: 40px;
}

.lower {
    margin-top: 25px;
}

.with-vscroll {
    display: flex;
}

.with-vscroll .grid {
    width: 140px;
}

.vscroll {
    width: 18px;
    padding: 7px 0;
    display: flex;
    flex-direction: column;
    align-items: center;
    justify-content: space-between;
    background: #abc7e7;
}

.vscroll i {
    width: 18px;
    height: 216px;
    margin-top: 42px;
    background: #d6d6d6;
}

.grid {
    width: 100%;
    table-layout: fixed;
    border-collapse: separate;
    border-spacing: 0;
    background: #fff;
}

.c-120 { width: 120px; }
.c-110 { width: 110px; }
.c-95 { width: 95px; }
.c-86 { width: 86px; }
.c-80 { width: 80px; }
.c-19 { width: 19px; }
.c-8 { width: 8px; }

.grid th, .grid td {
    height: 20px;
    padding: 0 3px 0 5px;
    overflow: hidden;
    white-space: nowrap;
}

.grid th {
    position: relative;
    padding-right: 17px;
    background: #abc7e7;
    border-right: 1px solid #7ba2d0;
    border-bottom: 1px solid #7ba2d0;
    font-weight: normal;
    text-align: center;
}

.grid td {
    border-right: 1px dotted #b4b4b4;
    border-bottom: 1px dotted #b4b4b4;
}

.grid .tk {
    padding: 0 0 0 2px;
    text-align: left;
    border-right: none;
}

.grid .tk-wide {
    padding-left: 4px;
}

.grid .num {
    text-align: right;
}

.pin {
    position: absolute;
    top: 5px;
    right: 1px;
    width: 9px;
    height: 8px;
}

.pin.down {
    width: 8px;
    height: 9px;
}

.grid tfoot td {
    height: 17px;
    background: #f0f0f0;
    border-top: 1px solid #7ba2d0;
    border-right: 1px solid #7ba2d0;
    border-bottom: none;
}

.grid tfoot .sum {
    background: #d6d6d6;
}

.side-grid td:last-child, .side-grid th:last-child {
    border-right: none;
}

.side-grid .cut-head {
    padding-left: 2px;
    text-align: left;
}

.side-grid td:first-child {
    padding-left: 1px;
}

.side-grid .tax-head {
    padding: 0 0 0 14px;
    text-align: left;
}

.side-grid .tax {
    padding: 0 0 0 68px;
}

.side-grid .tax-sum {
    padding: 0 0 0 56px;
}

.filter td {
    background: #ffffdd;
}

.side-grid .op {
    padding-left: 0;
}

.op span {
    display: block;
    width: 18px;
    line-height: 19px;
    text-align: center;
    font-size: 14px;
    border-right: 1px dotted #999;
}

.current td {
    background: #fff0c8;
}

.grid .half td {
    height: 9px;
    border-bottom: none;
}

.half div {
    height: 9px;
    line-height: 18px;
    overflow: hidden;
}

.hscroll {
    height: 18px;
    display: flex;
    border-top: 1px solid #7ba2d0;
    background: #abc7e7;
}

.hscroll i {
    width: 123px;
    background: #d6d6d6;
}

.hscroll span {
    width: 17px;
    display: flex;
    align-items: center;
    justify-content: center;
}

.hscroll em {
    flex: 1;
    background: #f0f0f0;
}

.hscroll.thumb i {
    width: 86px;
    margin-left: 54px;
}

.arrow {
    width: 4px;
    height: 8px;
}

.status {
    flex: none;
    height: 25px;
    padding: 4px 0 2px 2px;
    display: flex;
    gap: 2px;
    background: #c2d6ee;
}

.status span {
    padding-left: 3px;
    display: flex;
    align-items: center;
    background: #abc7e7;
    border: 1px solid #7ba2d0;
}

.status .server {
    flex: 1;
    gap: 2px;
    padding-left: 2px;
}

.s-empty { width: 36px; }
.s-time { width: 54px; }
.s-date { width: 64px; }

/* voucher window */
.dialog {
    position: absolute;
    top: 20px;
    left: 158px;
    right: 158px;
    bottom: 0;
    display: flex;
    flex-direction: column;
    overflow: hidden;
    background: #cbdcf0;
    border-left: 1px solid #5f90c5;
    border-right: 1px solid #5f90c5;
    box-shadow: 1px 0 3px rgba(0, 0, 0, 0.4);
}

.dialog-title {
    flex: none;
    height: 29px;
    padding-left: 3px;
    display: flex;
    align-items: center;
    gap: 4px;
    background: #6495c8;
    color: #fff;
}

.dialog-title .win-buttons {
    margin-left: auto;
}

.toolbar {
    flex: none;
    height: 39px;
    display: flex;
    background: #abc7e7;
}

.toolbar button {
    padding: 4px 8px 0;
    display: flex;
    flex-direction: column;
    align-items: center;
    gap: 3px;
    white-space: nowrap;
}

.toolbar button svg {
    width: 16px;
    height: 16px;
}

.toolbar button:disabled {
    color: #7f8790;
}

.drop {
    width: 5px;
    height: 3px;
    margin: 18px 4px 0 -2px;
}

.dim {
    color: #6b7684;
}

.sep {
    width: 2px;
    height: 20px;
    margin: 9px 2px 0 1px;
    background: #7ba6da;
}

.voucher {
    padding: 0 9px 0 8px;
}

.voucher-head {
    display: flex;
    height: 66px;
    padding-top: 6px;
}

.head-left {
    width: 210px;
    margin-right: 14px;
}

.head-left h1 {
    margin: 0;
    height: 33px;
    padding-left: 4px;
    font: bold 20px/30px "Noto Sans", sans-serif;
    white-space: nowrap;
}

input[type="text"], select {
    height: 21px;
    padding: 0 4px;
    background: #e6e6e6;
    border: 1px solid #7ba2d0;
    appearance: none;
    outline: none;
}

.quote-no {
    width: 100%;
}

input.quote-no {
    height: 23px;
    padding-left: 37px;
}

.quote-no::placeholder {
    color: #777;
    font-style: italic;
}

.opt-row {
    display: flex;
    align-items: center;
    padding-top: 6px;
}

.second {
    padding-top: 7px;
}

.opt-row label {
    display: flex;
    align-items: center;
    gap: 6px;
    white-space: nowrap;
}

.sale-type {
    width: 210px;
    margin-right: 6px;
}

.opt-row .sale-type {
    padding: 0 3px;
}

.unpaid {
    width: 111px;
}

.opt-row .unpaid, .opt-row .paid {
    gap: 3px;
}

.paid {
    width: 101px;
}

.pay-by {
    width: 101px;
    margin-right: 10px;
}

.opt-row .pay-by {
    padding: 0 2px;
}

input[type="checkbox"], input[type="radio"] {
    appearance: none;
    width: 13px;
    height: 13px;
    background: #f4f4f4;
    border: 1px solid #b4b4b4;
}

input[type="radio"] {
    width: 12px;
    height: 12px;
    border-radius: 50%;
    border-color: #c4c4c4;
}

input[type="radio"]:checked {
    border-color: #8c8c8c;
    background: radial-gradient(circle, #888 2px, #eee 4px);
}

input[type="checkbox"]:checked::before {
    content: "";
    display: block;
    width: 4px;
    height: 8px;
    margin: 0 0 0 4px;
    border: solid #aaa;
    border-width: 0 2px 2px 0;
    transform: rotate(40deg);
}

.stamp {
    width: 144px;
    height: 25px;
    margin: 31px 1px 0 auto;
    border: 2px solid #c00000;
    color: #c00000;
    font: bold 13px/21px "Noto Sans", sans-serif;
    text-align: center;
}

.tabs {
    display: flex;
}

.tabs button {
    height: 20px;
    margin-bottom: -1px;
    border: 1px solid #7ba2d0;
    border-left: none;
}

.tabs .on {
    background: #ffe69c;
    border-left: 1px solid #7ba2d0;
    border-bottom-color: #ffe69c;
    font-weight: bold;
}

.tabs u {
    text-underline-offset: 2px;
}

.main-tabs button {
    width: 67px;
}

.main-tabs .on {
    width: 74px;
}

.panel {
    height: 192px;
    padding: 10px 8px 8px 9px;
    display: flex;
    gap: 10px;
    border: 1px solid #7ba2d0;
}

fieldset {
    margin: 0;
    padding: 9px 8px 0;
    min-width: 0;
    border: 1px solid #7ba2d0;
}

legend {
    padding: 0 3px;
    margin-left: -5px;
    height: 13px;
    line-height: 13px;
    font-weight: bold;
}

.general {
    flex: 1;
}

.document {
    width: 206px;
}

.row {
    height: 24px;
    display: flex;
    align-items: center;
}

.row label, .row .label {
    width: 70px;
    white-space: nowrap;
}

.document .row label {
    width: 86px;
}

.grow {
    flex: 1;
    min-width: 0;
}

.short {
    width: 192px;
}

.name {
    margin-left: 8px;
}

.row .attach {
    width: 64px;
    padding-left: 10px;
}

.attach-no {
    width: 271px;
}

.after {
    margin-left: 2px;
}

.refs {
    flex: 1;
    padding-left: 2px;
    color: #00f;
}

.refs a {
    text-decoration: underline;
}

.find {
    width: 24px;
    height: 24px;
    display: flex;
    align-items: center;
    justify-content: center;
    border: 1px solid #7ba2d0;
}

.collapse {
    width: 50px;
    height: 9px;
    margin: -1px auto 0;
    display: flex;
    align-items: center;
    justify-content: center;
    background: #abc7e7;
    border: 1px solid #7ba2d0;
}

.detail-tabs {
    margin-top: 6px;
}

.detail-tabs button {
    padding: 0 13px;
}

.detail-tabs .on {
    padding: 0 12px;
}

.detail {
    border: 1px solid #7ba2d0;
}

.lines td:first-child, .lines th:first-child {
    border-right: 1px solid #808080;
}

.lines .acc {
    color: #4a0f1c;
}

.lines .last td {
    height: 17px;
    border-bottom: none;
}

.grid .count {
    padding-left: 4px;
}

.hscroll.wide i {
    flex: 1;
    padding: 5px 6px;
    background: none;
}

.wide b {
    width: 259px;
    background: #d6d6d6;
}

.bottom {
    display: flex;
    padding-top: 9px;
}

.actions {
    width: 120px;
    display: flex;
    flex-direction: column;
    gap: 6px;
}

.actions button {
    height: 23px;
    background: #abc7e7;
    border: 1px solid #7ba2d0;
}

.actions button:disabled {
    background: none;
    color: #7f8790;
}

.totals {
    width: 210px;
    margin: 3px 0 0 190px;
}

.totals div {
    height: 23px;
    display: flex;
    align-items: center;
    justify-content: space-between;
}

.totals dt {
    font-weight: bold;
}

.totals dd {
    margin: 0;
}

.tax-totals {
    width: 236px;
    margin-left: 144px;
}

/* taskbar */
.taskbar {
    flex: none;
    height: 40px;
    display: flex;
    background: linear-gradient(90deg, #1f679f 0, #2f86bd 110px, #6c9fcd 200px, #85add5 500px, #5f9ac6 620px, #6aa0ca 820px, #4f7fae 1000px, #6285ab 1180px, #1f4570 1215px, #173760 100%);
    border-top: 1px solid #23405c;
    box-shadow: inset 0 1px 0 rgba(255, 255, 255, 0.4);
    color: #fff;
}

.start {
    width: 62px;
    padding-left: 8px;
}

.task {
    width: 58px;
    margin-right: 2px;
    display: flex;
    align-items: center;
    justify-content: center;
}

.open {
    border: 1px solid #24425f;
    border-radius: 3px;
    background: linear-gradient(160deg, rgba(255, 255, 255, 0.65), rgba(255, 255, 255, 0.2));
    box-shadow: inset 0 0 0 1px rgba(255, 255, 255, 0.5);
}

.stack {
    width: 55px;
    margin: 0 6px 0 0;
    box-shadow: inset 0 0 0 1px rgba(255, 255, 255, 0.5), 3px 0 0 #8fb3d8, 4px 0 0 #24425f;
}

.task:nth-child(4) {
    margin-right: 6px;
}

.bright {
    background: linear-gradient(160deg, #f4f8fc, #b9cfe6);
}

.tray {
    margin-left: auto;
    display: flex;
    align-items: center;
    gap: 9px;
    font-size: 12px;
}

.lang {
    margin-right: 6px;
    padding-bottom: 5px;
    color: #e6eef7;
}

.tray time {
    width: 72px;
    margin: 0 6px 0 0;
    line-height: 17px;
    text-align: center;
}

.peek {
    width: 14px;
    height: 39px;
    margin-left: -9px;
    border: 1px solid #7b92ad;
    background: linear-gradient(160deg, #5d7898, #1b395f 60%);
}
```
